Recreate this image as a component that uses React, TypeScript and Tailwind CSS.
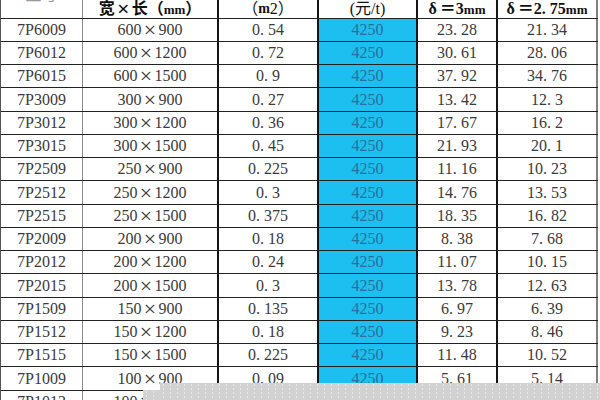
import React from "react";

type Row = [string, string, string, string, string, string];

const rows: Row[] = [
  ["7P6009", "600", "900", "0.54", "23.28", "21.34"],
  ["7P6012", "600", "1200", "0.72", "30.61", "28.06"],
  ["7P6015", "600", "1500", "0.9", "37.92", "34.76"],
  ["7P3009", "300", "900", "0.27", "13.42", "12.3"],
  ["7P3012", "300", "1200", "0.36", "17.67", "16.2"],
  ["7P3015", "300", "1500", "0.45", "21.93", "20.1"],
  ["7P2509", "250", "900", "0.225", "11.16", "10.23"],
  ["7P2512", "250", "1200", "0.3", "14.76", "13.53"],
  ["7P2515", "250", "1500", "0.375", "18.35", "16.82"],
  ["7P2009", "200", "900", "0.18", "8.38", "7.68"],
  ["7P2012", "200", "1200", "0.24", "11.07", "10.15"],
  ["7P2015", "200", "1500", "0.3", "13.78", "12.63"],
  ["7P1509", "150", "900", "0.135", "6.97", "6.39"],
  ["7P1512", "150", "1200", "0.18", "9.23", "8.46"],
  ["7P1515", "150", "1500", "0.225", "11.48", "10.52"],
  ["7P1009", "100", "900", "0.09", "5.61", "5.14"],
  ["7P1012", "100", "1200", "0.12", "7.48", "6.86"],
];

const font = { fontFamily: '"Liberation Serif", "Noto Sans CJK SC", serif' };

function Num({ v }: { v: string }) {
  const i = v.indexOf(".");
  if (i < 0) return <>{v}</>;
  return (
    <>
      {v.slice(0, i)}
      <span className="inline-block w-[0.5em]">.</span>
      {v.slice(i + 1)}
    </>
  );
}

function Times() {
  return (
    <span className="inline-block w-[17px] text-center text-[22px] leading-none">
      ×
    </span>
  );
}

const cellBase = "flex items-center justify-center shrink-0";

export default function App() {
  return (
    <div
      className="relative w-[600px] h-[400px] overflow-hidden bg-white text-[#3a3a3a] text-[16px]"
      style={font}
    >
      <div className="border-l border-l-[#555] w-[598px]">
        {/* header */}
        <div className="flex h-[19px] border-b border-b-[#222] text-[#111] leading-none">
          <div className={`${cellBase} w-[82px] border-r border-r-[#8a8a8a] overflow-hidden items-start`}>
            <span className="-mt-[13px] text-[#9a9a9a]">型号</span>
          </div>
          <div className={`${cellBase} w-[136px] border-r-2 border-r-[#161616] font-bold`}>
            宽<Times />长（<span className="text-[13px]">mm</span>）
          </div>
          <div className={`${cellBase} w-[100px] border-r-2 border-r-[#161616]`}>
            （<span className="font-bold text-[14px]">m</span>2）
          </div>
          <div className={`${cellBase} w-[99px] border-r-2 border-r-[#161616]`}>
            (元/t)
          </div>
          <div className={`${cellBase} w-[80px] border-r-2 border-r-[#161616] font-bold`}>
            δ<span className="ml-[3px]">＝</span>3<span className="text-[13px]">mm</span>
          </div>
          <div className={`${cellBase} w-[100px] border-r-2 border-r-[#808080] font-bold`}>
            δ<span className="ml-[3px]">＝</span>2<span className="inline-block w-[0.5em]">.</span>75
            <span className="text-[13px]">mm</span>
          </div>
        </div>
        {rows.map((r, i) => (
          <div
            key={r[0]}
            className={`flex border-b border-b-[#222] leading-none ${
              i % 4 === 3 ? "h-[24px]" : "h-[23px]"
            }`}
          >
            <div className={`${cellBase} w-[82px] border-r border-r-[#8a8a8a]`}>{r[0]}</div>
            <div className={`${cellBase} w-[136px] border-r-2 border-r-[#161616]`}>
              {r[1]}
              <Times />
              {r[2]}
            </div>
            <div className={`${cellBase} w-[100px] border-r-2 border-r-[#161616]`}>
              <Num v={r[3]} />
            </div>
            <div className={`${cellBase} w-[99px] border-r-2 border-r-[#161616] bg-[#1cbff0] text-[#2a6e9c]`}>
              4250
            </div>
            <div className={`${cellBase} w-[80px] border-r-2 border-r-[#161616]`}>
              <Num v={r[4]} />
            </div>
            <div className={`${cellBase} w-[100px] border-r-2 border-r-[#808080]`}>
              <Num v={r[5]} />
            </div>
          </div>
        ))}
      </div>
      {/* dotted overlay at bottom */}
      <div className="absolute left-[160px] top-[383px] right-0 bottom-0 bg-[#d2d2d2] bg-[radial-gradient(#f6f6f6_0.8px,transparent_1px)] bg-size-[7px_4px]" />
      <div className="absolute left-[143px] top-[390px] w-[17px] bottom-0 bg-[#d2d2d2] bg-[radial-gradient(#f6f6f6_0.8px,transparent_1px)] bg-size-[7px_4px]" />
    </div>
  );
}
